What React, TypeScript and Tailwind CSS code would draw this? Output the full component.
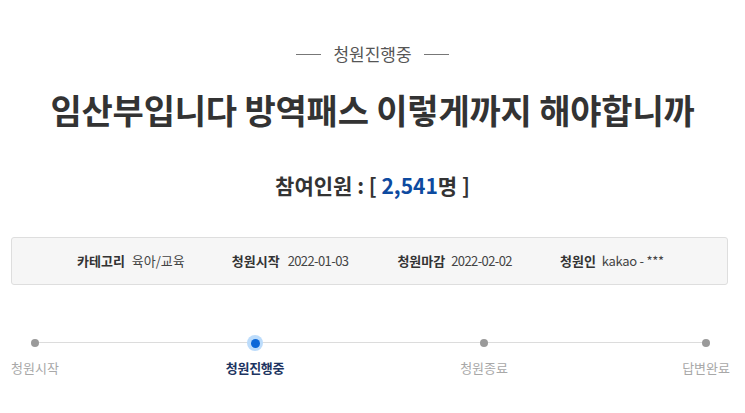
import React from "react";

const font = { fontFamily: '"Noto Sans CJK KR", "Noto Sans", sans-serif' };

function Step({ label, active, className = "" }: { label: string; active?: boolean; className?: string }) {
  return (
    <div className={"relative z-10 flex flex-col items-center " + className}>
      <div className="flex h-[16px] w-[16px] items-center justify-center">
        {active ? (
          <div className="flex h-[16px] w-[16px] items-center justify-center rounded-full bg-[#bcdcfb]">
            <div className="h-[9px] w-[9px] rounded-full bg-[#0b67d8]" />
          </div>
        ) : (
          <div className="h-[8px] w-[8px] rounded-full bg-[#9a9a9a]" />
        )}
      </div>
      <div
        className={
          active
            ? "mt-[9px] text-[13px] font-bold leading-[16px] tracking-[-0.3px] text-[#1d3461]"
            : "mt-[9px] text-[13px] leading-[16px] text-[#a8a8a8]"
        }
      >
        {label}
      </div>
    </div>
  );
}

export default function App() {
  return (
    <div className="h-[413px] w-[745px] overflow-hidden bg-white" style={font}>
      <div className="flex items-center justify-center pt-[42px] text-[17px] leading-[24px] text-[#555]">
        <span className="mr-[12px] h-px w-[25px] bg-[#777]" />
        <span>청원진행중</span>
        <span className="ml-[12px] h-px w-[25px] bg-[#777]" />
      </div>
      <h1 className="mt-[22px] text-center text-[34px] font-bold leading-[44px] tracking-[-0.2px] text-[#333]">
        임산부입니다 방역패스 이렇게까지 해야합니까
      </h1>
      <div className="mt-[39px] text-center text-[21px] font-bold leading-[28px] text-[#333]">
        참여인원 : [ <span className="text-[#0d4aa0]">2,541</span>명 ]
      </div>
      <div className="mx-[11px] mt-[38px] flex h-[48px] w-[717px] items-center rounded-[3px] border border-[#dedede] bg-[#f6f6f6] pl-[65px] text-[13px] text-[#333]">
        <span className="font-bold">카테고리</span>
        <span className="ml-[7px] text-[#444]">육아/교육</span>
        <span className="ml-[47px] font-bold">청원시작</span>
        <span className="ml-[8px] tracking-[-0.6px] text-[#444]">2022-01-03</span>
        <span className="ml-[49px] font-bold">청원마감</span>
        <span className="ml-[6px] tracking-[-0.6px] text-[#444]">2022-02-02</span>
        <span className="ml-[48px] font-bold">청원인</span>
        <span className="ml-[6px] tracking-[-0.3px] text-[#444]">kakao - ***</span>
      </div>
      <div className="relative mx-[11px] mt-[50px] flex w-[719px]">
        <div className="absolute left-[24px] right-[25px] top-[7px] h-px bg-[#dcdcdc]" />
        <Step label="청원시작" />
        <Step label="청원진행중" active className="ml-[167px]" />
        <Step label="청원종료" className="ml-[176px]" />
        <Step label="답변완료" className="ml-auto" />
      </div>
    </div>
  );
}
